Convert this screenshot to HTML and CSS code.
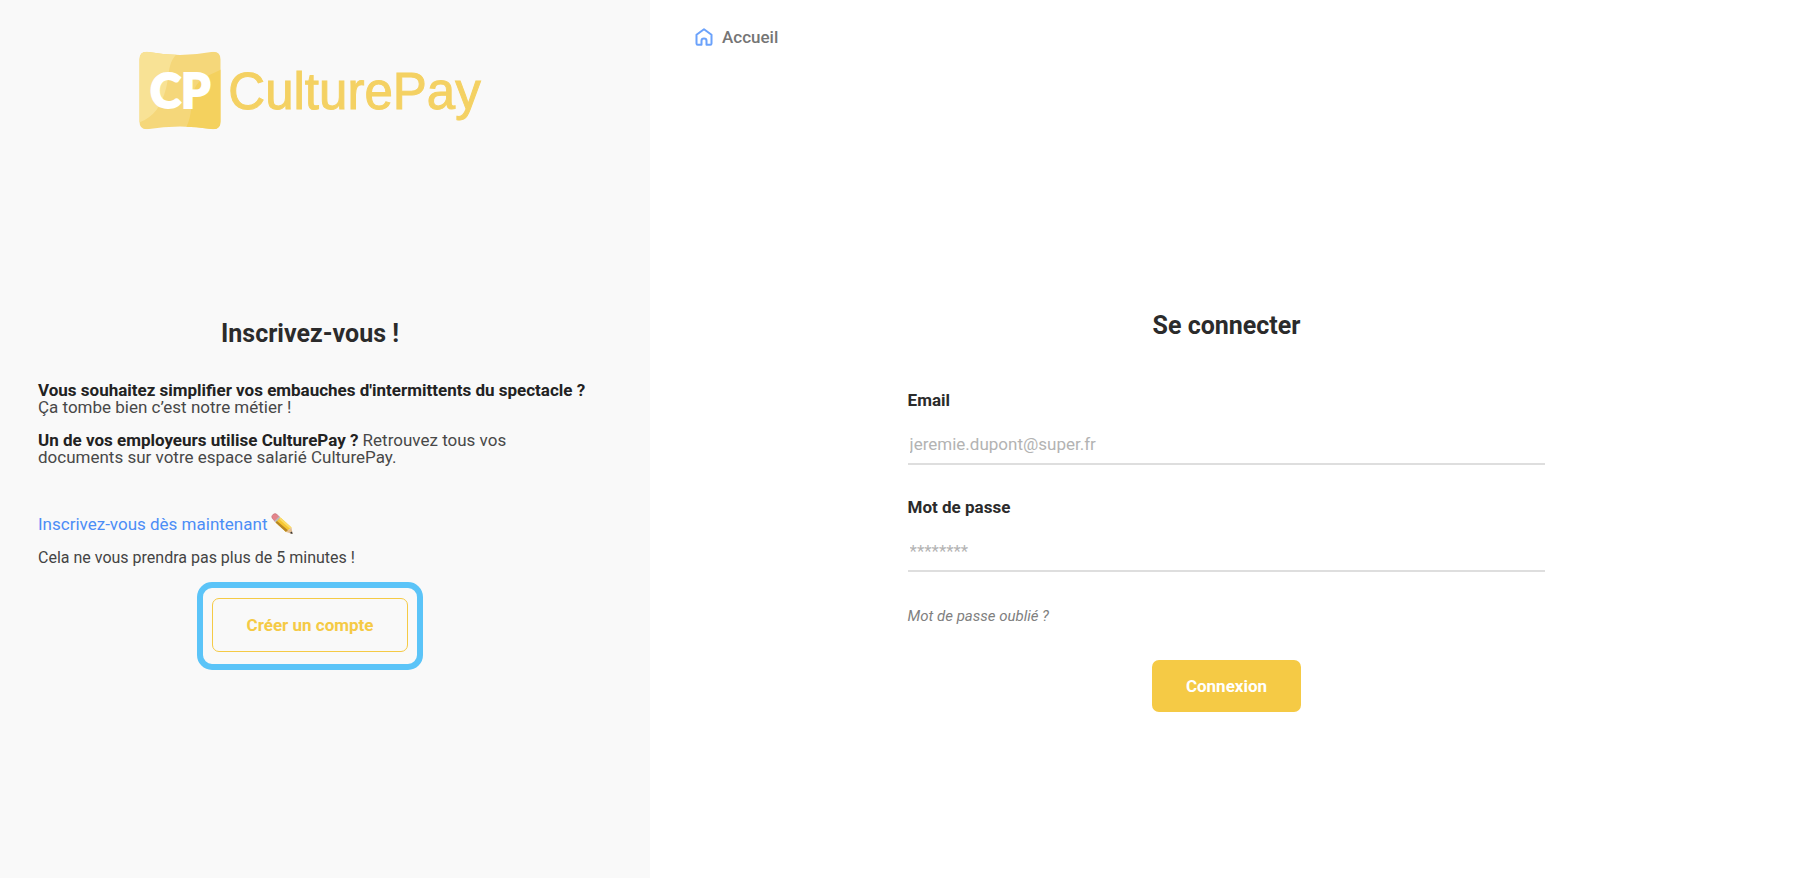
FILE: index.html
```html
<!DOCTYPE html>
<html lang="fr">
<head>
<meta charset="utf-8">
<title>CulturePay</title>
<link rel="stylesheet" href="styles.css">
</head>
<body>
<div class="page">
  <aside class="signup">
    <div class="brand">
      <svg class="brand-mark" viewBox="0 0 82 78" role="img" aria-label="CP">
        <defs>
          <clipPath id="mark">
            <path d="M8 .3Q41 6.500 74 .3Q81.500 0 81.500 8V70Q81.500 78 74 77.700Q41 72.500 8 77.700Q.5 78 .5 70V8Q.5 0 8 .3Z"/>
          </clipPath>
        </defs>
        <g clip-path="url(#mark)">
          <rect width="82" height="78" fill="#f5d77a"/>
          <path d="M0 0H41C28 9 31 22 27 37C23 53 15 66 0 71Z" fill="#f8e295"/>
          <path d="M82 18C72 24 56 26 54 44C52 57 52 68 46 78H82Z" fill="#f4d15e"/>
        </g>
        <text class="brand-initials" x="11" y="56">CP</text>
      </svg>
      <span class="brand-name">CulturePay</span>
    </div>
    <section class="signup-body">
      <h1 class="title">Inscrivez-vous !</h1>
      <p class="pitch"><strong>Vous souhaitez simplifier vos embauches d'intermittents du spectacle ?</strong><br>Ça tombe bien c’est notre métier !</p>
      <p class="pitch"><strong>Un de vos employeurs utilise CulturePay ?</strong> Retrouvez tous vos<br>documents sur votre espace salarié CulturePay.</p>
      <p class="invite"><a class="invite-link" href="#">Inscrivez-vous dès maintenant</a>
        <svg class="pencil" viewBox="0 0 22 22" aria-hidden="true">
          <path d="M1 5Q0 3 2 1.500T5.500 1L8.500 4L4 8.500Z" fill="#e5848b" stroke="#b9656c" stroke-width=".5"/>
          <path d="M3.500 8L8 3.500L10 5.500L5.500 10Z" fill="#b5bcc0"/>
          <path d="M4.500 9.500L9.500 4.500L20.500 14.500L15 19Z" fill="#f6c631"/>
          <path d="M4.500 9.500L6 8L17 17.300L15 19Z" fill="#b78625"/>
          <path d="M8 6L9.500 4.500L20.500 14.500L19 15.700Z" fill="#fbdc67"/>
          <path d="M15 19L20.500 14.500L21.500 21Z" fill="#e3bd91"/>
          <path d="M18.800 20L21 18.400L21.600 21Z" fill="#333"/>
        </svg>
      </p>
      <p class="note">Cela ne vous prendra pas plus de 5 minutes !</p>
      <div class="highlight"><button class="button button-outline" type="button">Créer un compte</button></div>
    </section>
  </aside>
  <main class="login">
    <nav>
      <a class="home" href="#">
        <svg class="home-icon" viewBox="0 0 18 18" aria-hidden="true"><path d="M1.500 6.800L9 1.300L16.500 6.800V15.500Q16.500 16.700 15.300 16.700H11.500V12.800Q11.500 10.500 9 10.500T6.500 12.800V16.700H2.700Q1.500 16.700 1.500 15.500Z"/></svg>
        <span>Accueil</span>
      </a>
    </nav>
    <form class="login-form">
      <h2 class="title">Se connecter</h2>
      <div class="field">
        <label class="label" for="email">Email</label>
        <input class="input" id="email" type="email" placeholder="jeremie.dupont@super.fr">
      </div>
      <div class="field">
        <label class="label" for="password">Mot de passe</label>
        <input class="input" id="password" type="password" placeholder="********">
      </div>
      <a class="forgot" href="#">Mot de passe oublié ?</a>
      <button class="button button-solid" type="button">Connexion</button>
    </form>
  </main>
</div>
</body>
</html>
```
FILE: styles.css
```css
* {
  box-sizing: border-box;
}

body {
  margin: 0;
  background: #fff;
  color: #2b2b2b;
  font-family: Roboto, "Liberation Sans", sans-serif;
  font-size: 17px;
  line-height: 17px;
}

.page {
  display: grid;
  grid-template-columns: minmax(0, 13fr) minmax(0, 23fr);
  min-height: 100vh;
}

.signup {
  padding: 51px 68px 32px 38px;
  background: #f9f9f9;
}

.brand {
  display: flex;
  align-items: center;
  justify-content: center;
  gap: 7px;
}

.brand-mark {
  flex: none;
  width: 82px;
  height: 79px;
}

.brand-initials {
  fill: #fff;
  stroke: #fff;
  stroke-width: 2;
  font-family: Lato, sans-serif;
  font-size: 47px;
  font-weight: 900;
}

.brand-name {
  padding-top: 3px;
  color: #f4d163;
  font-family: "Liberation Sans", sans-serif;
  font-size: 51px;
  line-height: 76px;
  -webkit-text-stroke: 1px #f4d163;
}

.signup-body {
  display: flex;
  flex-direction: column;
  margin-top: 188px;
}

.title {
  margin: 0;
  font-size: 25px;
  font-weight: 700;
  line-height: 32px;
  text-align: center;
}

.signup .title {
  margin-bottom: 32px;
}

.pitch {
  margin: 0 0 16px;
  color: #484848;
  white-space: nowrap;
}

.pitch strong {
  color: #222;
}

.invite {
  display: flex;
  align-items: center;
  gap: 4px;
  height: 24px;
  margin: 30px 0 13px;
}

.invite-link {
  color: #4c8df6;
  text-decoration: none;
}

.pencil {
  width: 22px;
  height: 22px;
}

.note {
  margin: 0;
  color: #444;
  font-size: 16px;
}

.highlight {
  align-self: center;
  margin-top: 16px;
  padding: 10px 9px 12px;
  border: 6px solid #5bc4f8;
  border-radius: 15px;
}

.button {
  display: block;
  border-radius: 7px;
  font-family: inherit;
  font-size: 17px;
  font-weight: 700;
  line-height: 20px;
  cursor: pointer;
}

.button-outline {
  padding: 16px 34px;
  border: 1px solid #f5ca45;
  background: transparent;
  color: #f5ca45;
}

.login {
  padding: 27px 42px 27px 45px;
}

.home {
  display: inline-flex;
  align-items: center;
  gap: 9px;
  height: 20px;
  color: #757575;
  font-size: 17px;
  font-weight: 500;
  text-decoration: none;
}

.home-icon {
  width: 18px;
  height: 18px;
  fill: none;
  stroke: #6ba2fb;
  stroke-width: 2;
  stroke-linejoin: round;
}

.login-form {
  display: flex;
  flex-direction: column;
  width: 60%;
  margin: 261px auto 0;
}

.login .title {
  margin-bottom: 48px;
}

.field {
  display: flex;
  flex-direction: column;
  gap: 17px;
  margin-bottom: 32px;
}

.label {
  font-weight: 700;
  line-height: 20px;
}

.input {
  width: 100%;
  height: 38px;
  padding: 0 2px 2px;
  border: 0;
  border-bottom: 2px solid #dedede;
  background: transparent;
  color: #2b2b2b;
  font-family: inherit;
  font-size: 17px;
}

.input::placeholder {
  color: #b3b3b3;
}

.forgot {
  align-self: flex-start;
  margin-top: 4px;
  color: #808080;
  font-size: 15px;
  font-style: italic;
  text-decoration: none;
}

.button-solid {
  align-self: center;
  margin-top: 35px;
  padding: 16px 34px;
  border: 0;
  background: #f5ca45;
  color: #fff;
}
```
